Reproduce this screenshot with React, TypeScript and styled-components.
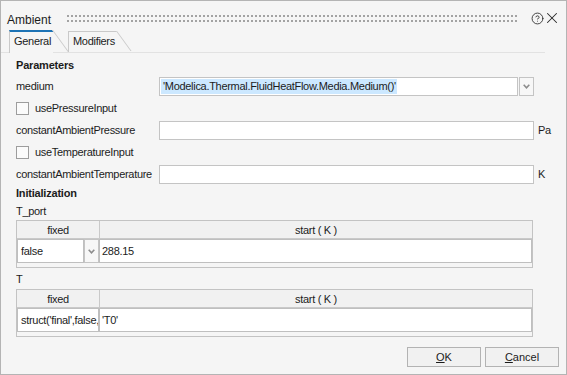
import React from 'react';
import styled, { createGlobalStyle } from 'styled-components';
import { CircleHelp, X } from 'lucide-react';

const GlobalStyle = createGlobalStyle`
  * { box-sizing: border-box; }
  html, body {
    margin: 0;
    padding: 0;
    background: #f5f5f5;
  }
  body {
    font-family: "Liberation Sans", Arial, sans-serif;
    font-size: 11px;
    letter-spacing: -0.3px;
    color: #1c1c1c;
  }
`;

const Window = styled.div`
  width: 567px;
  height: 375px;
  border: 1px solid #b4b4b4;
  background: #f5f5f5;
  display: flex;
  flex-direction: column;
`;

const TitleBar = styled.div`
  height: 29px;
  padding: 8px 5px 0 6px;
  display: flex;
  align-items: center;
`;

const Title = styled.span`
  font-size: 12px;
  letter-spacing: 0;
`;

const Grip = styled.div`
  flex: 1;
  height: 10px;
  margin: 0 12px 0 16px;
  background:
    linear-gradient(to right, transparent 2px, #f5f5f5 2px) 0 0 / 4px 5px,
    linear-gradient(to bottom, #a3a3a3 2px, transparent 2px) 0 0 / 4px 5px;
`;

const TitleIcons = styled.div`
  display: flex;
  align-items: center;
  margin-bottom: 3px;
  color: #2a2a2a;

  svg + svg {
    margin-left: -1px;
  }
`;

const TabBar = styled.div`
  height: 23px;
  margin-right: 21px;
  padding-left: 8px;
  display: flex;
  align-items: flex-end;
  border-bottom: 1px solid #e2e2e2;
`;

const Tab = styled.div<{ $active?: boolean; $width: number }>`
  position: relative;
  width: ${(p) => p.$width}px;
  height: ${(p) => (p.$active ? 23 : 21)}px;
  margin-left: ${(p) => (p.$active ? 0 : 15)}px;
  margin-bottom: ${(p) => (p.$active ? -1 : 0)}px;
  padding: ${(p) => (p.$active ? 3 : 3)}px 0 0 4px;
  border-left: 1px solid #c9c9c9;
  border-top: ${(p) => (p.$active ? '2px solid #1d73b5' : '1px solid #c9c9c9')};
  background: #f5f5f5;
  color: #1c1c1c;

  &::after {
    content: '';
    position: absolute;
    top: ${(p) => (p.$active ? -2 : -1)}px;
    right: -14px;
    width: 14px;
    height: ${(p) => (p.$active ? 22 : 20)}px;
    border-left: 1px solid #c9c9c9;
    transform-origin: top left;
    transform: skewX(36deg);
    background: #f5f5f5;
  }
`;

const Panel = styled.div`
  padding: 2px 0 0 15px;
  display: flex;
  flex-direction: column;
`;

const SectionTitle = styled.div<{ $h: number }>`
  height: ${(p) => p.$h}px;
  display: flex;
  align-items: center;
  font-weight: bold;
  letter-spacing: -0.2px;
`;

const SubLabel = styled.div<{ $h: number }>`
  height: ${(p) => p.$h}px;
  display: flex;
  align-items: center;
`;

const Params = styled.div`
  display: grid;
  grid-template-columns: 143px 375px auto;
  grid-auto-rows: 22px;
  align-items: center;
`;

const Label = styled.span`
  white-space: nowrap;
`;

const Unit = styled.span`
  padding-left: 4px;
`;

const CheckRow = styled.label`
  grid-column: 1 / -1;
  display: flex;
  align-items: center;
  gap: 6px;
`;

const CheckBox = styled.span`
  width: 13px;
  height: 13px;
  border: 1px solid #9d9d9d;
  background: #fbfbfb;
`;

const TextField = styled.div`
  height: 19px;
  border: 1px solid #c4c4c4;
  background: #fff;
  display: flex;
  align-items: center;
  padding-left: 2px;
  white-space: nowrap;
  overflow: hidden;
`;

const Combo = styled.div`
  display: flex;
  gap: 1px;
`;

const ComboField = styled(TextField)`
  flex: 1;
  padding-left: 1px;
`;

const Selected = styled.span`
  background: #cce8ff;
  padding: 1px 1px 2px 2px;
`;

const ArrowButton = styled.div<{ $h: number }>`
  width: 15px;
  height: ${(p) => p.$h}px;
  border: 1px solid #c4c4c4;
  background: #f7f7f7;
  display: flex;
  align-items: center;
  justify-content: center;
`;

const Table = styled.div`
  width: 517px;
  border: 1px solid #c3c3c3;
  background: #f5f5f5;
  display: grid;
  grid-template-columns: 82px 1fr;
`;

const HeadCell = styled.div`
  height: 18px;
  border-bottom: 1px solid #c9c9c9;
  background: #f1f1f1;
  display: flex;
  align-items: center;
  justify-content: center;

  & + & {
    border-left: 1px solid #c9c9c9;
  }
`;

const DataCell = styled.div`
  height: 24px;
  display: flex;
  gap: 0;
`;

const CellField = styled.div<{ $pad?: number }>`
  flex: 1;
  height: 24px;
  border: 1px solid #bfbfbf;
  background: #fff;
  display: flex;
  align-items: center;
  padding-left: ${(p) => p.$pad ?? 2}px;
  white-space: nowrap;
  overflow: hidden;
`;

const TableFoot = styled.div`
  grid-column: 1 / -1;
  height: 4px;
`;

const Footer = styled.div`
  margin-top: auto;
  padding: 0 7px 7px 0;
  display: flex;
  justify-content: flex-end;
  gap: 4px;
`;

const Button = styled.button`
  width: 74px;
  height: 20px;
  border: 1px solid #b3b3b3;
  background: #f1f1f1;
  font: inherit;
  color: #1c1c1c;
  padding: 0;
`;

function DropArrow() {
  return (
    <svg width="7" height="5" viewBox="0 0 7 5">
      <path d="M0.7 0.8 L3.5 3.8 L6.3 0.8" fill="none" stroke="#8c8c8c" strokeWidth="1.6" />
    </svg>
  );
}

type Row = { fixed: string; start: string; select?: boolean };

function InitTable({ row }: { row: Row }) {
  return (
    <Table>
      <HeadCell>fixed</HeadCell>
      <HeadCell>start ( K )</HeadCell>
      <DataCell>
        <CellField $pad={3}>{row.fixed}</CellField>
        {row.select && <ArrowButton $h={24}><DropArrow /></ArrowButton>}
      </DataCell>
      <DataCell>
        <CellField>{row.start}</CellField>
      </DataCell>
      <TableFoot />
    </Table>
  );
}

export default function App() {
  return (
    <>
      <GlobalStyle />
      <Window>
        <TitleBar>
          <Title>Ambient</Title>
          <Grip />
          <TitleIcons>
            <CircleHelp size={13} strokeWidth={1.6} />
            <X size={18} strokeWidth={1.4} />
          </TitleIcons>
        </TitleBar>
        <TabBar>
          <Tab $active $width={44}>General</Tab>
          <Tab $width={49}>Modifiers</Tab>
        </TabBar>
        <Panel>
          <SectionTitle $h={20}>Parameters</SectionTitle>
          <Params>
            <Label>medium</Label>
            <Combo>
              <ComboField>
                <Selected>'Modelica.Thermal.FluidHeatFlow.Media.Medium()'</Selected>
              </ComboField>
              <ArrowButton $h={19}><DropArrow /></ArrowButton>
            </Combo>
            <span />
            <CheckRow>
              <CheckBox />
              usePressureInput
            </CheckRow>
            <Label>constantAmbientPressure</Label>
            <TextField />
            <Unit>Pa</Unit>
            <CheckRow>
              <CheckBox />
              useTemperatureInput
            </CheckRow>
            <Label>constantAmbientTemperature</Label>
            <TextField />
            <Unit>K</Unit>
          </Params>
          <SectionTitle $h={16}>Initialization</SectionTitle>
          <SubLabel $h={19}>T_port</SubLabel>
          <InitTable row={{ fixed: 'false', start: '288.15', select: true }} />
          <SubLabel $h={21}>T</SubLabel>
          <InitTable row={{ fixed: "struct('final',false,", start: "'T0'" }} />
        </Panel>
        <Footer>
          <Button><u>O</u>K</Button>
          <Button><u>C</u>ancel</Button>
        </Footer>
      </Window>
    </>
  );
}
